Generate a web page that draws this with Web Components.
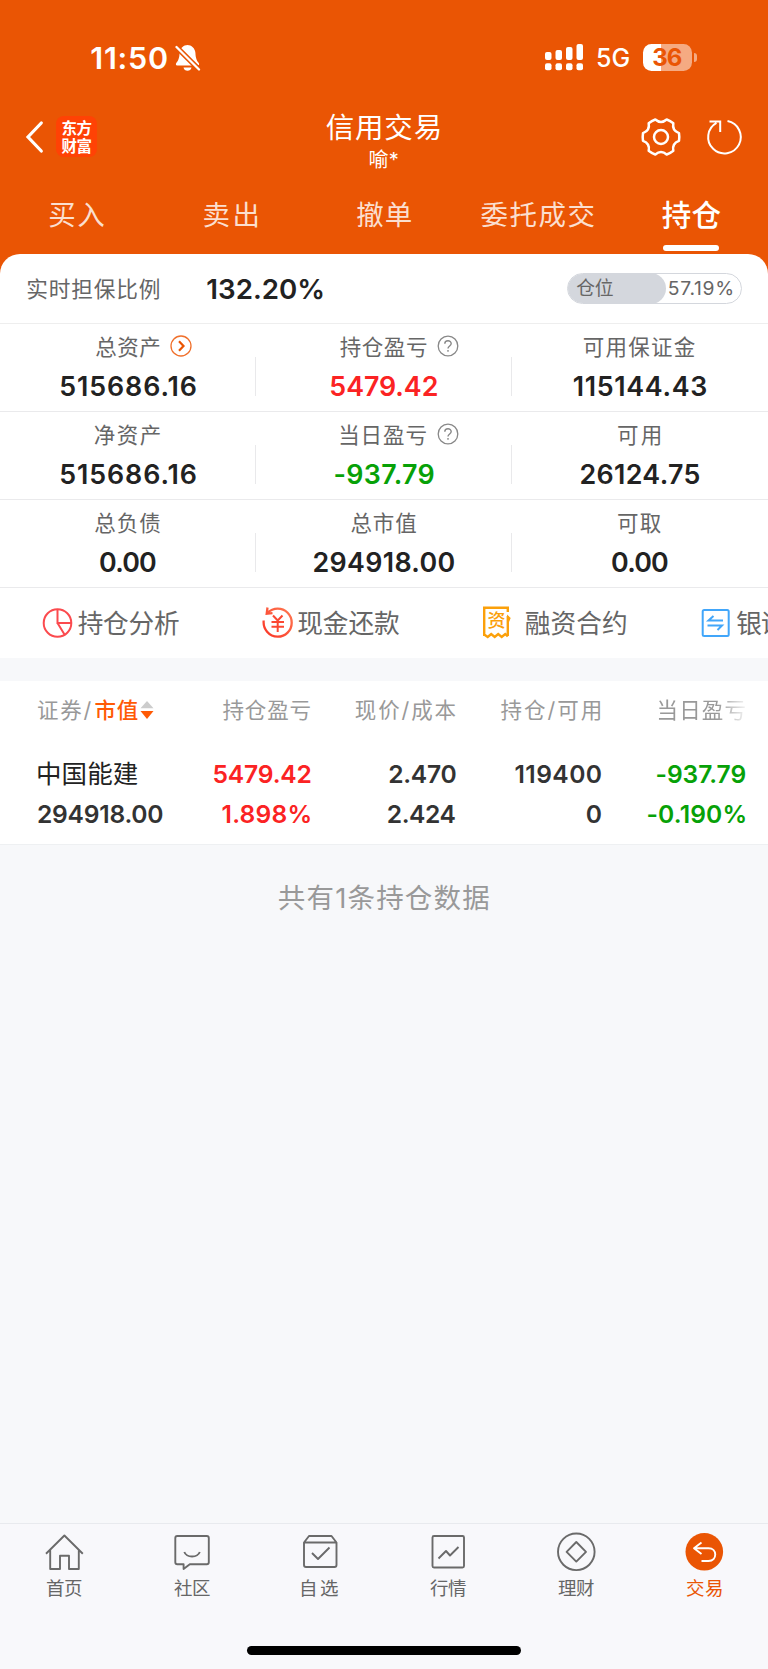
<!DOCTYPE html>
<html lang="zh-CN">
<head>
<meta charset="utf-8">
<title>信用交易</title>
<style>
html,body{margin:0;padding:0;background:#f7f8fa}
body{font-family:Inter,"Noto Sans CJK SC",sans-serif;color:#222;width:768px}
</style>
</head>
<body>
<trade-app></trade-app>
<script>
const ctx = document.createElement('canvas').getContext('2d');

/* Text run tracked so that its ink fills exactly the width given in `w`. */
class FitText extends HTMLElement {
  connectedCallback() {
    const w = +this.getAttribute('w');
    const size = this.getAttribute('size') || 22;
    const weight = this.getAttribute('weight') || 400;
    const color = this.getAttribute('color') || 'inherit';
    const h = this.getAttribute('h') || 30;
    const root = this.attachShadow({mode: 'open'});
    const text = this.textContent;
    ctx.font = `${weight} ${size}px Inter, "Noto Sans CJK SC", sans-serif`;
    const m = ctx.measureText(text);
    const n = [...text].length;
    const ink = m.actualBoundingBoxRight + m.actualBoundingBoxLeft;
    const ls = n > 1 ? (w - ink) / (n - 1) : 0;
    root.innerHTML = `<style>
      :host{display:block;flex:none;width:${w}px;height:${h}px;line-height:${h}px;font-size:${size}px;font-weight:${weight};color:${color};white-space:nowrap}
      span{display:inline-block;margin-left:${m.actualBoundingBoxLeft}px;margin-right:-40px;letter-spacing:${ls}px;line-height:inherit}
    </style><span><slot></slot></span>`;
  }
}
customElements.define('fit-text', FitText);

const define = (name, render) => customElements.define(name, class extends HTMLElement {
  connectedCallback() {
    if (this.shadowRoot) return;
    this.attachShadow({mode: 'open'}).innerHTML = render(this);
  }
});
const t = (text, w, size, weight, color, extra = '') =>
  `<fit-text w="${w}" size="${size}" weight="${weight || 400}" color="${color || 'inherit'}" ${extra}>${text}</fit-text>`;

define('status-bar', () => `<style>
  :host{display:flex;height:57px;padding:29px 76px 0 91.3px;align-items:center;color:#fff;box-sizing:content-box}
  svg{display:block;flex:none}
  .sp{flex:1}
  .bat{position:relative;width:49px;height:26.5px;border-radius:8.5px;background:linear-gradient(90deg,#fff 18px,#f5aa82 18px);display:flex;align-items:center;justify-content:center;margin-left:13.5px}
  .bat::after{content:"";position:absolute;right:-4.5px;top:9px;width:3px;height:8.5px;border-radius:0 4px 4px 0;background:#f5aa82}
</style>
${t('11:50', 75.7, 30.5, 600)}
<svg width="26" height="28" viewBox="0 0 26 28" style="margin-left:8.5px">
  <path fill="#fff" d="M12.5 1C8.6 1 5 4.3 4.6 8.7 4.4 14 3.4 16.200 1.400 18.800.5 20.200.8 21.500 2.200 21.500H22.800C24.200 21.500 24.500 20.200 23.600 18.800 21.600 16.200 20.600 14 20.400 8.700 20 4.300 16.400 1 12.500 1ZM8.500 23.500H16.500C16 25.800 14.500 26.800 12.500 26.800S9 25.800 8.500 23.500Z"/>
  <path stroke="#ea5504" stroke-width="5.200" d="M0 1.500 25.500 27"/>
  <path stroke="#fff" stroke-width="2.300" stroke-linecap="round" d="M1.500 3 24 25.500"/>
</svg>
<span class="sp"></span>
<svg width="39" height="27" viewBox="0 0 39 27" fill="#fff">
  <rect x="0" y="8" width="6.500" height="8" rx="2"/><rect x="10.500" y="6" width="6.500" height="10" rx="2"/><rect x="21" y="3" width="6.500" height="13" rx="2"/><rect x="31.500" y="0" width="6.500" height="16" rx="2"/>
  <rect x="0" y="19.300" width="6.500" height="7" rx="2"/><rect x="10.500" y="19.300" width="6.500" height="7" rx="2"/><rect x="21" y="19.300" width="6.500" height="7" rx="2"/><rect x="31.500" y="19.300" width="6.500" height="7" rx="2"/>
</svg>
<div style="margin-left:13.5px">${t('5G', 32.5, 25, 500)}</div>
<div class="bat">${t('36', 28.3, 24, 700, '#ea5504')}</div>`);

const gear = () => {
  const p = (a, r) => `${(20 + r * Math.cos(a * Math.PI / 180)).toFixed(2)} ${(20 + r * Math.sin(a * Math.PI / 180)).toFixed(2)}`;
  let d = 'M' + p(-12, 18.4);
  for (let a = 0; a < 360; a += 60) d += `Q${p(a, 18.6)} ${p(a + 12, 18.4)}Q${p(a + 30, 12.6)} ${p(a + 48, 18.4)}`;
  return d + 'Z';
};

define('nav-bar', () => `<style>
  :host{display:grid;grid-template-columns:1fr auto 1fr;height:88px;padding:0 23.700px 0 25px;box-sizing:border-box;color:#fff}
  .side{display:flex;align-items:flex-start;padding-top:21px;height:60px}
  .r{justify-content:flex-end;align-items:flex-start}
  .logo{width:41px;height:41px;margin-left:12px;margin-top:9px;border-radius:8px;background:#ff4205;display:flex;flex-direction:column;align-items:center;gap:1px;padding-top:3.500px;box-sizing:border-box}
  .mid{display:flex;flex-direction:column;align-items:center;padding-top:26px;margin-right:4px}
  .sub{margin-left:2px}
  svg{display:block}
</style>
<div class="side">
  <svg width="19" height="36" viewBox="0 0 19 36" style="margin-top:12px" fill="none" stroke="#fff" stroke-width="3.200"><path stroke-linecap="round" d="M16.300 4 3 18 16.300 32"/></svg>
  <div class="logo">${t('东方', 30, 15.5, 700, '#fff', 'h="17"')}${t('财富', 30, 15.5, 700, '#fff', 'h="17"')}</div>
</div>
<div class="mid">${t('信用交易', 114, 28.5, 400, '', 'h="31"')}<div class="sub">${t('喻*', 28.3, 20, 400, '', 'h="35"')}</div></div>
<div class="side r">
  <svg width="40" height="40" viewBox="0 0 40 40" style="margin-top:9.500px;margin-right:23.600px" fill="none" stroke="#fff" stroke-width="2.500" stroke-linejoin="round"><path d="${gear()}"/><circle cx="20" cy="20" r="7"/></svg>
  <svg width="40" height="40" viewBox="0 0 40 40" style="margin-top:9.500px" fill="none" stroke="#fff" stroke-width="2"><path d="M23.500 4.100A16.300 16.300 0 1 1 12.500 5.900M5.500 4.600H16.200V15"/></svg>
</div>`);

define('tab-strip', () => `<style>
  :host{display:grid;grid-template-columns:repeat(5,1fr);height:79.500px;color:rgba(255,255,255,.82)}
  div{display:flex;flex-direction:column;align-items:center;padding-top:26px}
  .on{color:#fff}
  i{width:56px;height:5.500px;border-radius:3px;background:#fff;margin-top:15px}
</style>
<div>${t('买入', 55, 27.5)}</div><div>${t('卖出', 54, 27.5)}</div><div>${t('撤单', 55.4, 27.5)}</div><div>${t('委托成交', 114, 27.5)}</div>
<div class="on">${t('持仓', 58.7, 29.5, 500)}<i></i></div>`);

define('ratio-row', () => `<style>
  :host{display:flex;align-items:center;height:70px;padding:0 26.300px 0 27.300px;border-bottom:1px solid #eee;box-sizing:border-box}
  .k,.v{padding-top:2px}
  .v{margin-left:47.600px;flex:1}
  .pill{width:174.700px;height:31px;border:1.500px solid #d4d7dd;border-radius:16px;box-sizing:border-box;display:flex;align-items:center;justify-content:space-between;padding-right:8.500px;overflow:hidden}
  .fill{width:98.200px;height:31px;border-radius:0 16px 16px 0;background:#d4d7dd;display:flex;align-items:center;padding-left:8.200px;box-sizing:border-box}
  .fill fit-text{margin-top:2px}
</style>
<div class="k">${t('实时担保比例', 132.4, 21.7, 400, '#666')}</div>
<div class="v">${t('132.20%', 116, 27.7, 600)}</div>
<div class="pill"><div class="fill">${t('仓位', 36.5, 18.8, 400, '#666')}</div>${t('57.19%', 63.4, 19.3, 400, '#666')}</div>`);

const marks = {
  more: `<svg width="22" height="22" viewBox="0 0 22 22" fill="none" stroke="#f0702c"><circle cx="11" cy="11" r="10" stroke-width="1.300"/><path stroke="#ea5504" stroke-width="2.200" d="M9 6.300 13.500 11 9 15.700"/></svg>`,
  help: `<svg width="22" height="22" viewBox="0 0 22 22" fill="none" stroke="#888" stroke-width="1.300"><circle cx="11" cy="11" r="9.800"/><path stroke-width="1.400" d="M7.800 8.800C7.800 4.800 14.200 4.900 14.200 8.600 14.200 11 11 11 11 13.600M11 15V16.700"/></svg>`
};
define('metric-cell', el => {
  const a = n => el.getAttribute(n);
  return `<style>
  :host{display:flex;flex-direction:column;align-items:center;position:relative;height:88px;border-bottom:1px solid #eaeaec;box-sizing:border-box;padding-top:8px}
  .l{position:relative;left:-.700px}
  .l svg{position:absolute;left:calc(100% + 10.500px);top:3px}
  .v{padding-top:9px}
  :host([line])::after{content:"";position:absolute;right:0;top:33px;width:1px;height:39px;background:#e9e9eb}
</style>
<div class="l">${t(a('label'), a('lw'), 21.5, 400, '#666')}${marks[a('mark')] || ''}</div>
<div class="v">${t(a('value'), a('vw'), 26.8, 600, a('color') || '#222')}</div>`;
});

define('metric-grid', () => {
  const c = (label, lw, value, vw, extra = '') => `<metric-cell label="${label}" lw="${lw}" value="${value}" vw="${vw}" ${extra}></metric-cell>`;
  return `<style>:host{display:grid;grid-template-columns:repeat(3,1fr)}</style>`
    + c('总资产', 64, '515686.16', 135.7, 'mark="more" line')
    + c('持仓盈亏', 87.3, '5479.42', 107.3, 'mark="help" color="#fb2323" line')
    + c('可用保证金', 111, '115144.43', 132.3)
    + c('净资产', 65, '515686.16', 135.7, 'line')
    + c('当日盈亏', 86.3, '-937.79', 99, 'mark="help" color="#07a107" line')
    + c('可用', 42.7, '26124.75', 119)
    + c('总负债', 66, '0.00', 56, 'line')
    + c('总市值', 65.7, '294918.00', 141, 'line')
    + c('可取', 42.7, '0.00', 56);
});

define('quick-actions', () => `<style>
  :host{display:flex;align-items:center;height:70px;overflow:hidden;color:#666;position:relative}
  .a{display:flex;align-items:center;flex:none}
  .n{padding-top:2px}
  svg{display:block;flex:none}
  .zi{position:relative}
  .zi fit-text{position:absolute;left:4.500px;top:5px}
</style>
<div class="a" style="width:219.500px;padding-left:42px">
  <svg width="32" height="32" viewBox="0 0 32 32" fill="none" stroke="#fb4a4e" stroke-width="2"><circle cx="15.500" cy="16" r="13.800"/><path d="M15.500 2V16H29.500M15.500 16 22.500 27.500"/></svg>
  <div class="n" style="margin-left:3.700px">${t('持仓分析', 101.3, 25.7)}</div></div>
<div class="a" style="width:221.500px">
  <svg width="32" height="34" viewBox="0 0 32 34" fill="none" stroke="url(#g)" stroke-width="2.300"><defs><linearGradient id="g" x1="0" y1="1" x2="1" y2="0"><stop offset="0" stop-color="#fa3426"/><stop offset="1" stop-color="#ff7a52"/></linearGradient></defs><path d="M1.700 14.500C.8 23 7 30.700 15.700 30.700A14 14 0 0 0 29.700 16.700C29.700 9 23.500 2.700 15.700 2.700 11.500 2.700 8.500 4 5.200 7.200M5.500 1.500 4.700 7.700 10.500 7.200"/><path stroke="#fb4832" stroke-width="2" d="M11 9.500 15.700 14.500 20.500 9.500M9.500 16H22M9.500 20.800H22M15.700 14.500V26"/></svg>
  <div class="n" style="margin-left:4.800px">${t('现金还款', 100.7, 25.7)}</div></div>
<div class="a" style="width:218.300px">
  <div class="zi"><svg width="28" height="33" viewBox="0 0 28 33" fill="none" stroke="#fba00a" stroke-width="2.400"><path d="M1.200 30V1.700H24.800V6M24.800 10V30M1.200 28.500 4.700 31 8.200 28 11.700 31 15.200 28 18.700 31 22.200 28 24.800 30.500"/><path fill="#fba00a" stroke="none" d="M24 8.500 27.700 12 26 16H24Z"/></svg>${t('资', 17, 18, 500, '#fba00a', 'h="20"')}</div>
  <div class="n" style="margin-left:14.700px">${t('融资合约', 100.3, 25.7)}</div></div>
<div class="a">
  <svg width="29" height="30" viewBox="0 0 29 30" fill="none" stroke="#41a6fa" stroke-width="2"><rect x="1.700" y="2" width="26" height="26" rx="1.500"/><path d="M22 12.500H7.500L12.500 8M6.500 17.500H21L16.500 22"/></svg>
  <div class="n" style="margin-left:6px">${t('银证', 49.5, 25.7)}</div></div>`);

define('holdings-table', () => {
  const g = '#999', r = '#fb2323', k = '#333', n = '#07a107';
  return `<style>
  :host{display:block;background:#fff;height:164px;border-bottom:1px solid #eef0f2;box-sizing:border-box}
  .row{display:grid;grid-template-columns:145px 127.500px 145px 145.300px 144.700px;padding-left:38px;padding-right:22.700px}
  .row>*{justify-self:end}
  .row>:first-child{justify-self:start}
  .head{padding-top:14px}
  .b1{padding-top:34.500px}.b2{padding-top:10px}
  .sort{display:flex;align-items:center}
  .fade{-webkit-mask-image:linear-gradient(90deg,#000 68%,rgba(0,0,0,.15));mask-image:linear-gradient(90deg,#000 68%,rgba(0,0,0,.15))}
  svg{display:block}
</style>
<div class="row head">
  <div class="sort">${t('证券/', 53.5, 21.5, 400, g)}<div style="margin-left:4px">${t('市值', 42.3, 21.5, 500, '#ff5a05')}</div>
  <svg style="margin-left:2px" width="14" height="20" viewBox="0 0 14 20"><path fill="#ccc" d="M7 1 13.500 8.200H.5Z"/><path fill="#ff5a05" d="M.5 11H13.500L7 19Z"/></svg></div>
  ${t('持仓盈亏', 88, 21.5, 400, g)}${t('现价/成本', 100.7, 21.5, 400, g)}${t('持仓/可用', 100.3, 21.5, 400, g)}<div class="fade">${t('当日盈亏', 87, 21.5, 400, g)}</div>
</div>
<div class="row b1">${t('中国能建', 99.7, 25.500, 400, '#222')}${t('5479.42', 97, 24.6, 600, r)}${t('2.470', 66.3, 24.6, 600, k)}${t('119400', 85.3, 24.6, 600, k)}${t('-937.79', 89, 24.6, 600, n)}</div>
<div class="row b2">${t('294918.00', 124.3, 24.6, 600, k)}${t('1.898%', 88, 24.6, 600, r)}${t('2.424', 67.7, 24.6, 600, k)}${t('0', 14, 24.6, 600, k)}${t('-0.190%', 98, 24.6, 600, n)}</div>`;
});

const tabIcons = {
  home: `<path d="M2 22.700 20.400 4.500 38.800 22.700M6.200 19V38H16V24.800H25V38H34.800V19"/>`,
  chat: `<path d="M4.500 5H34Q36 5 36 7V31.300Q36 33.300 34 33.300H17L10.800 38V33.300H4.500Q2.500 33.300 2.500 31.300V7Q2.500 5 4.500 5ZM11.500 21C14 27 24.500 27 27 21" transform="translate(.8 0)"/>`,
  box: `<path d="M4 11.500V34Q4 36 6 36H34.500Q36.500 36 36.500 34V11.500L31.500 5H9ZM4 11.500H36.500M12 22 18 28 29.500 16.500"/>`,
  chart: `<rect x="4.500" y="5" width="31.500" height="31.500" rx="1.500"/><path d="M10.500 27.500 18 20 22 24.500 30.500 16"/>`,
  coin: `<circle cx="20.300" cy="20.800" r="18.300"/><path d="M20.300 11 30 20.800 20.300 30.600 10.600 20.800Z"/>`,
  trade: `<circle cx="20.300" cy="20.800" r="18.800" fill="#ea5504" stroke="none"/><path stroke="#fff" d="M17.500 11.500 10 17.200 17.500 23M10.500 17.200H24.500C33.500 17.200 33.500 30 24.500 30H17.500"/>`
};
define('tab-bar', () => `<style>
  :host{display:flex;flex-direction:column;align-items:center;height:146px;border-top:1.500px solid #e8eaee;background:#f8f8fb;box-sizing:border-box}
  .g{display:grid;grid-template-columns:repeat(6,1fr);width:768px;color:#666}
  .g>div{display:flex;flex-direction:column;align-items:center;padding-top:6.500px}
  .on{color:#ea5504}
  svg{display:block;margin-bottom:1px}
  i{width:273.700px;height:9px;border-radius:5px;background:#000;margin-top:43px}
</style><div class="g">${[['home', '首页'], ['chat', '社区'], ['box', '自选'], ['chart', '行情'], ['coin', '理财'], ['trade', '交易']].map(([k, s]) =>
  `<div${k === 'trade' ? ' class="on"' : ''}><svg width="41" height="41" viewBox="0 0 41 41" fill="none" stroke="#6a6a6a" stroke-width="1.900" stroke-linejoin="round">${tabIcons[k]}</svg>${t(s, 36, 18.5)}</div>`).join('')}</div><i></i>`);

define('trade-app', () => `<style>
  :host{display:flex;flex-direction:column;width:768px;height:1669px;background:#f7f8fa;overflow:hidden}
  .top{background:#ea5504;height:279px;margin-bottom:-25.500px;flex:none}
  .sheet{background:#fff;border-radius:20px 20px 0 0;overflow:hidden;flex:none}
  .gap{height:23px;flex:none}
  .sum{display:flex;justify-content:center;padding-top:38px;flex:1}
</style>
<div class="top"><status-bar></status-bar><nav-bar></nav-bar><tab-strip></tab-strip></div>
<div class="sheet"><ratio-row></ratio-row><metric-grid></metric-grid><quick-actions></quick-actions></div>
<div class="gap"></div>
<holdings-table></holdings-table>
<div class="sum">${t('共有1条持仓数据', 210.4, 27.5, 400, '#999')}</div>
<tab-bar></tab-bar>`);
</script>
</body>
</html>
